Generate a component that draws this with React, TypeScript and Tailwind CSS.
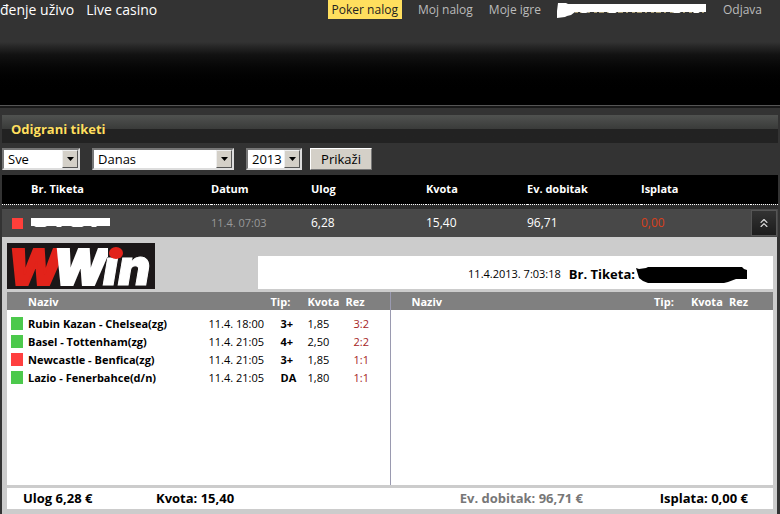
import { ChevronsUp } from "lucide-react";
import type { ReactNode } from "react";

type Match = {
	name: string;
	date: string;
	tip: string;
	odds: string;
	result: string;
	won: boolean;
};

const matches: Match[] = [
	{ name: "Rubin Kazan - Chelsea(zg)", date: "11.4. 18:00", tip: "3+", odds: "1,85", result: "3:2", won: true },
	{ name: "Basel - Tottenham(zg)", date: "11.4. 21:05", tip: "4+", odds: "2,50", result: "2:2", won: true },
	{ name: "Newcastle - Benfica(zg)", date: "11.4. 21:05", tip: "3+", odds: "1,85", result: "1:1", won: false },
	{ name: "Lazio - Fenerbahce(d/n)", date: "11.4. 21:05", tip: "DA", odds: "1,80", result: "1:1", won: true },
];

const Header = () => (
	<header className="flex h-[105px] items-start justify-between bg-linear-to-b from-[#333] from-40% via-[#121212] via-52% to-black to-90%">
		<nav className="flex gap-3 text-[14px] leading-[19px] text-white">
			<a href="#uzivo">đenje uživo</a>
			<a href="#casino">Live casino</a>
		</nav>
		<nav className="flex gap-4 pr-[18px] text-[12px] leading-[19px] text-[#bbb]">
			<a href="#poker" className="bg-[#ffdf5e] px-1 text-[#222]">
				Poker nalog
			</a>
			<a href="#nalog">Moj nalog</a>
			<a href="#igre">Moje igre</a>
			<svg width="150" height="19" viewBox="0 0 150 19" aria-hidden="true">
				<path d="M18 12.5H148" stroke="#a79a72" strokeDasharray="3 2 5 3 2 4" />
				<path d="M1 3h8l2 1h138v8h-6l-2 1h-4l-1-1h-12l-2 1h-5l-2-1H60l-2 1h-6l-1-1H32l-3 1h-4l-2-1h-5l-4 3-4 1-2 1-8 1-1-6 1-1z" fill="#fff" />
			</svg>
			<a href="#odjava">Odjava</a>
		</nav>
	</header>
);

const Select = ({ label, className, options }: { label: string; className: string; options: string[] }) => (
	<div className={`relative h-[22px] ${className}`}>
		<select
			aria-label={label}
			className="block h-full w-full appearance-none border-2 border-t-[#777] border-r-[#ddd] border-b-[#ddd] border-l-[#777] bg-white pl-1 text-[13px] leading-[18px] text-black"
		>
			{options.map((option) => (
				<option key={option}>{option}</option>
			))}
		</select>
		<span className="pointer-events-none absolute inset-y-0.5 right-0.5 flex w-4 items-center justify-center border border-t-[#eee] border-r-[#555] border-b-[#555] border-l-[#eee] bg-[#d4d0c8]">
			<svg width="7" height="4" viewBox="0 0 7 4" aria-hidden="true">
				<path d="M0 0h7L3.5 4z" />
			</svg>
		</span>
	</div>
);

const Filters = () => (
	<form className="flex h-8 items-center" onSubmit={(e) => e.preventDefault()}>
		<Select label="Status" className="mr-3 w-[78px]" options={["Sve"]} />
		<Select label="Period" className="mr-3 w-[142px]" options={["Danas"]} />
		<Select label="Godina" className="mr-2 w-[56px]" options={["2013"]} />
		<button className="h-[22px] w-[62px] border border-t-white border-r-[#777] border-b-[#777] border-l-white bg-[#d4d0c8] text-[13px] leading-[18px] text-black">
			Prikaži
		</button>
	</form>
);

const TicketTable = () => (
	<table className="w-full table-fixed text-left text-[12px] leading-4">
		<colgroup>
			<col className="w-[29px]" />
			<col className="w-[180px]" />
			<col className="w-[100px]" />
			<col className="w-[115px]" />
			<col className="w-[101px]" />
			<col className="w-[114px]" />
			<col />
			<col className="w-[27px]" />
		</colgroup>
		<thead className="bg-black text-[11px] text-white">
			<tr className="h-[29px] border-b border-dotted border-white">
				<td />
				<th>Br. Tiketa</th>
				<th>Datum</th>
				<th>Ulog</th>
				<th>Kvota</th>
				<th>Ev. dobitak</th>
				<th>Isplata</th>
				<td />
			</tr>
		</thead>
		<tbody>
			<tr className="h-[5px] bg-[#2c2c2c]">
				<td colSpan={8} />
			</tr>
			<tr className="h-7 bg-[#484848] text-white">
				<td>
					<div className="ml-[10px] size-[11px] bg-[#ff3f3a]" />
				</td>
				<td>
					<svg width="79" height="10" viewBox="0 0 79 10" aria-hidden="true">
						<path d="M0 0h79v8H66l-1 1h-4l-1-1h-7l-2 1h-9l-2-1h-9l-1 1h-4l-1-1h-9l-2 1H5L3 8H0z" fill="#fff" />
					</svg>
				</td>
				<td className="text-[11px] text-[#999]">11.4. 07:03</td>
				<td>6,28</td>
				<td>15,40</td>
				<td>96,71</td>
				<td className="text-[#d8401c]">0,00</td>
				<td>
					<button
						aria-label="Zatvori"
						className="flex h-[26px] w-[26px] items-center justify-center border border-[#555] bg-linear-to-b from-[#333] to-[#1c1c1c] text-[#ddd]"
					>
						<ChevronsUp size={14} strokeWidth={2} />
					</button>
				</td>
			</tr>
		</tbody>
	</table>
);

const Logo = () => (
	<svg className="overflow-visible" width="148" height="46" viewBox="0 0 148 46" role="img" aria-label="WWin">
		<rect width="148" height="46" fill="#1b1718" />
		<g className="font-['Inter',sans-serif] text-[50px] font-black italic">
			<text x="1" y="42" fill="#e2231a" stroke="#e2231a" strokeWidth="2">
				W
			</text>
			<text x="46" y="42" fill="#fff" stroke="#fff" strokeWidth="2">
				W
			</text>
			<text x="96" y="42" fill="#fff" stroke="#fff">
				i
			</text>
			<text x="111" y="42" fill="#fff" stroke="#fff">
				n
			</text>
		</g>
		<path d="M101 2h20v12h-20z" fill="#1b1718" />
		<path d="M101 5l-3 9h3z" fill="#fff" />
		<ellipse cx="109" cy="10" rx="7" ry="6" fill="#e2231a" />
	</svg>
);

const MatchTable = ({ rows, className = "" }: { rows: Match[]; className?: string }) => (
	<div className={`min-w-0 flex-1 ${className}`}>
		<table className="w-full table-fixed text-left text-[11px] leading-[17px]">
			<colgroup>
				<col className="w-[21px]" />
				<col />
				<col className="w-[62px]" />
				<col className="w-[37px]" />
				<col className="w-[38px]" />
				<col className="w-[44px]" />
			</colgroup>
			<thead className="bg-[#808080] text-white">
				<tr className="h-[18px]">
					<td />
					<th colSpan={2}>Naziv</th>
					<th>Tip:</th>
					<th>Kvota</th>
					<th>Rez</th>
				</tr>
			</thead>
			<tbody className="before:block before:h-1">
				{rows.map((row) => (
					<tr key={row.name} className="h-[18px]">
						<td>
							<div className={`ml-1 h-[13px] w-3 ${row.won ? "bg-[#4cc94c]" : "bg-[#ff3f3f]"}`} />
						</td>
						<th className="whitespace-nowrap">{row.name}</th>
						<td className="whitespace-nowrap">{row.date}</td>
						<th className="pl-2.5">{row.tip}</th>
						<td>{row.odds}</td>
						<td className="pl-2 text-[#a51d1d]">{row.result}</td>
					</tr>
				))}
			</tbody>
		</table>
	</div>
);

const Total = ({ className, children }: { className?: string; children: ReactNode }) => (
	<p className={className}>{children}</p>
);

const TicketDetails = () => (
	<section className="mr-px bg-[#ccc] pt-1.5 pr-1 pb-5 pl-[5px] text-black">
		<div className="flex items-end gap-[103px]">
			<Logo />
			<div className="flex h-[33px] flex-1 items-center justify-end gap-2 bg-white pt-1 pr-[25px]">
				<span className="text-[11px]">11.4.2013. 7:03:18</span>
				<div className="flex items-center text-[13px] font-bold">
					Br. Tiketa:
					<svg className="ml-px" width="112" height="16" viewBox="0 0 112 16" aria-hidden="true">
						<path d="M0 1l3 1 7-1 2-1h94l2 2 3 1v9h-11l-8 3-4 1H12l-5-2-4-3z" />
					</svg>
				</div>
			</div>
		</div>
		<div className="mt-[3px] flex h-[193px] bg-white">
			<MatchTable rows={matches} />
			<MatchTable rows={[]} className="border-l border-[#9a9ab0]" />
		</div>
		<div className="mt-[3px] flex h-[21px] items-center bg-white pr-[25px] pl-4 text-[13px] font-bold">
			<Total className="w-[133px]">Ulog 6,28 €</Total>
			<Total className="flex-1">Kvota: 15,40</Total>
			<Total className="w-[200px] text-[#777]">Ev. dobitak: 96,71 €</Total>
			<Total>Isplata: 0,00 €</Total>
		</div>
	</section>
);

const App = () => (
	<div className="h-screen overflow-hidden bg-[#333] font-['Open_Sans',sans-serif]">
		<Header />
		<div className="h-[3px] border-t border-[#555] bg-[#181818]" />
		<main className="mt-[7px] mr-0.5 ml-0.5">
			<h1 className="h-7 bg-linear-to-b from-[#505250] via-[#3a3b3a] via-50% to-[#222] to-50% pl-[9px] text-[13px] leading-7 font-bold text-[#ffdf5e]">
				Odigrani tiketi
			</h1>
			<Filters />
			<TicketTable />
			<TicketDetails />
		</main>
	</div>
);

export default App;
